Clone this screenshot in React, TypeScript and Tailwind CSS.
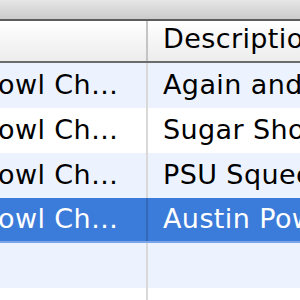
export default function App() {
  const rows = [
    { name: "owl Ch…", desc: "Again and again" },
    { name: "owl Ch…", desc: "Sugar Shock" },
    { name: "owl Ch…", desc: "PSU Squeeze" },
    { name: "owl Ch…", desc: "Austin Powers", selected: true },
    { name: "", desc: "" },
    { name: "", desc: "" },
  ];

  return (
    <div
      className="w-[300px] h-[300px] overflow-hidden bg-white flex flex-col tracking-[0.4px]"
      style={{ fontFamily: '"DejaVu Sans", Verdana, sans-serif' }}
    >
      {/* window strip above table */}
      <div className="h-[19px] shrink-0 bg-gradient-to-b from-[#e6e6e6] to-[#cbcbcb]" />
      <div className="h-[2px] shrink-0 bg-[#5c5c5c]" />

      {/* header */}
      <div className="h-[40px] shrink-0 flex bg-gradient-to-b from-[#ffffff] to-[#ececec]">
        <div className="w-[146px] shrink-0" />
        <div className="w-[2px] shrink-0 bg-[#c4c4c4]" />
        <div className="flex-1 flex items-center pl-[15px] pb-[3px] text-[27px] text-black whitespace-nowrap overflow-hidden">
          Description
        </div>
      </div>
      <div className="h-[2px] shrink-0 bg-[#6b6b6b]" />

      {/* rows */}
      {rows.map((r, i) => {
        const bg = r.selected
          ? "bg-[#3b7bd9]"
          : i % 2 === 0
            ? "bg-[#edf3fe]"
            : "bg-white";
        const text = r.selected ? "text-white" : "text-black";
        const divider = r.selected ? "bg-[#3468b8]" : "bg-[#d9d9d9]";
        return (
          <div key={i} className={`h-[45px] shrink-0 flex ${bg} ${text} ${r.selected ? "border-b-2 border-[#7aa5e6]" : ""}`}>
            <div className="w-[146px] shrink-0 flex items-center overflow-hidden whitespace-nowrap text-[27px]">
              <span className="ml-[-2px]">{r.name}</span>
            </div>
            <div className={`w-[2px] shrink-0 ${divider}`} />
            <div className="flex-1 flex items-center pl-[15px] overflow-hidden whitespace-nowrap text-[27px]">
              {r.desc}
            </div>
          </div>
        );
      })}
    </div>
  );
}
